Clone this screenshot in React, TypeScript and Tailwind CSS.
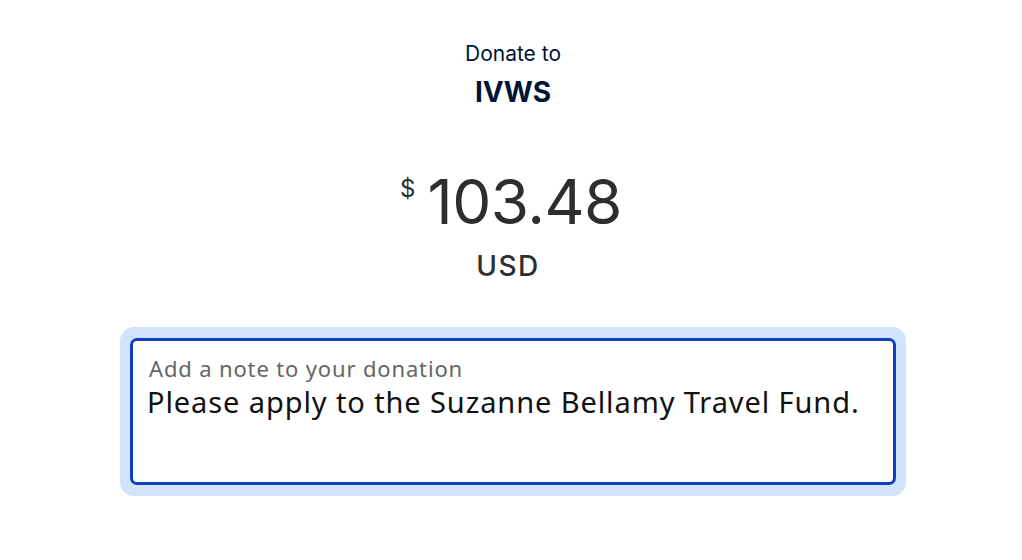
import React from 'react';

export default function App() {
  return (
    <div className="w-[1022px] h-[560px] bg-white flex flex-col items-center pl-[4px]" style={{ fontFamily: 'Inter, "Noto Sans", sans-serif' }}>
      <div className="mt-[41px] text-[21px] leading-[26px] text-[#001435]">Donate to</div>
      <div className="mt-[10px] text-[28px] leading-[30px] font-bold text-[#001435]">IVWS</div>

      <div className="mt-[68px] flex items-start text-[#2c2e2f] -ml-[4px]">
        <span className="text-[24px] leading-[24px] mr-[12px] mt-[2px]">$</span>
        <span className="text-[62px] leading-[54px] tracking-[-0.5px]">103.48</span>
      </div>
      <div className="mt-[20px] -ml-[10px] text-[28px] leading-[34px] font-medium tracking-[1.5px] text-[#2c2e2f]">USD</div>

      <div className="mt-[44px] w-[786px] rounded-[14px] bg-[#d1e4fb] px-[10px] py-[11px]">
        <div className="h-[147px] rounded-[7px] border-[3px] border-[#1040c1] bg-white px-[16px] pt-[14px]" style={{ fontFamily: '"Noto Sans", sans-serif' }}>
          <div className="text-[22px] leading-[26px] tracking-[0.85px] text-[#666]">Add a note to your donation</div>
          <div className="mt-[3px] -ml-[2px] text-[29px] leading-[36px] tracking-[0.9px] text-[#111]">Please apply to the Suzanne Bellamy Travel Fund.</div>
        </div>
      </div>
    </div>
  );
}
